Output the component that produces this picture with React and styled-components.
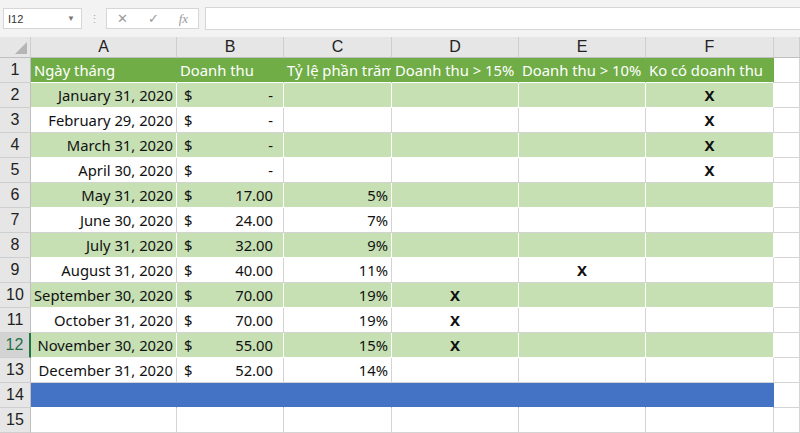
import React from "react";
import styled, { createGlobalStyle } from "styled-components";

const Global = createGlobalStyle`
  body { margin: 0; background: #fff; font-family: "Noto Sans", sans-serif; overflow: hidden; }
`;

const Bar = styled.div`
  height: 37px;
  background: #f3f3f3;
  display: flex;
  align-items: center;
  gap: 6px;
  padding: 0 0 0 3px;
  box-sizing: border-box;
`;
const NameBox = styled.div`
  width: 79px;
  height: 21px;
  background: #fff;
  border: 1px solid #d6d6d6;
  box-sizing: border-box;
  display: flex;
  align-items: center;
  justify-content: space-between;
  padding: 0 6px 0 4px;
  font: 11px "Liberation Sans", sans-serif;
  color: #333;
`;
const Dots = styled.div`
  color: #aaa;
  font-size: 11px;
  width: 12px;
  text-align: center;
`;
const Buttons = styled.div`
  width: 93px;
  height: 21px;
  background: #fff;
  border: 1px solid #d6d6d6;
  box-sizing: border-box;
  display: flex;
  align-items: center;
  justify-content: space-around;
  color: #999;
  font: 13px "Liberation Serif", serif;
`;
const Formula = styled.div`
  flex: 1;
  height: 21px;
  background: #fff;
  border: 1px solid #d6d6d6;
  border-right: none;
`;

const Grid = styled.div`
  display: grid;
  grid-template-columns: 31px 146px 107px 108px 127px 127px 128px 26px;
  grid-template-rows: 21px;
  grid-auto-rows: 25px;
`;
const ColHead = styled.div`
  background: #e6e6e6;
  border-right: 1px solid #cfcfcf;
  border-bottom: 1px solid #bfbfbf;
  display: flex;
  align-items: center;
  justify-content: center;
  font: 16px "Liberation Sans", sans-serif;
  color: #222;
`;
const Corner = styled(ColHead)`
  justify-content: flex-end;
  align-items: flex-end;
  padding: 3px;
  box-sizing: border-box;
`;
const RowHead = styled.div`
  background: ${p => (p.$sel ? "#d3d3d3" : "#e6e6e6")};
  color: ${p => (p.$sel ? "#217346" : "#222")};
  border-right: ${p => (p.$sel ? "2px solid #217346" : "1px solid #bfbfbf")};
  border-bottom: 1px solid #cfcfcf;
  display: flex;
  align-items: center;
  justify-content: center;
  font: 16px "Liberation Sans", sans-serif;
`;
const Cell = styled.div`
  background: ${p => p.$bg};
  color: ${p => (p.$head ? "#fff" : "#111")};
  border-right: 1px solid ${p => (p.$head || p.$blue ? p.$bg : p.$bg === "#fff" ? "#d4d4d4" : "#fff")};
  border-bottom: 1px solid ${p => (p.$bg === "#fff" ? "#d4d4d4" : "#fff")};
  display: flex;
  align-items: center;
  justify-content: ${p => p.$align || "flex-start"};
  padding: 0 3px;
  font-size: ${p => (p.$bold ? "15px" : "14.8px")};
  font-weight: ${p => (p.$bold ? 700 : 400)};
  white-space: nowrap;
  box-sizing: border-box;
  position: relative;
  z-index: ${p => (p.$head ? 1 : 0)};
`;
const Money = styled.span`
  display: flex;
  justify-content: space-between;
  width: 100%;
  padding: 0 10px 0 7px;
  box-sizing: border-box;
`;

const rows = [
  ["January 31, 2020", "-", "", 0, 0, 1],
  ["February 29, 2020", "-", "", 0, 0, 1],
  ["March 31, 2020", "-", "", 0, 0, 1],
  ["April 30, 2020", "-", "", 0, 0, 1],
  ["May 31, 2020", "17.00", "5%", 0, 0, 0],
  ["June 30, 2020", "24.00", "7%", 0, 0, 0],
  ["July 31, 2020", "32.00", "9%", 0, 0, 0],
  ["August 31, 2020", "40.00", "11%", 0, 1, 0],
  ["September 30, 2020", "70.00", "19%", 1, 0, 0],
  ["October 31, 2020", "70.00", "19%", 1, 0, 0],
  ["November 30, 2020", "55.00", "15%", 1, 0, 0],
  ["December 31, 2020", "52.00", "14%", 0, 0, 0],
];
const heads = ["Ngày tháng", "Doanh thu", "Tỷ lệ phần trăm", "Doanh thu > 15%", "Doanh thu > 10%", "Ko có doanh thu"];

export default function App() {
  return (
    <>
      <Global />
      <Bar>
        <NameBox>I12 <span style={{ fontSize: 8, color: "#777" }}>▼</span></NameBox>
        <Dots>⋮</Dots>
        <Buttons><span>✕</span><span>✓</span><i>fx</i></Buttons>
        <Formula />
      </Bar>
      <Grid>
        <Corner><svg width="12" height="12"><path d="M12 0V12H0Z" fill="#b5b5b5" /></svg></Corner>
        {"ABCDEF".split("").map(c => <ColHead key={c}>{c}</ColHead>)}
        <ColHead />
        <RowHead>1</RowHead>
        {heads.map((h, i) => (
          <Cell key={h} $bg="#70ad47" $head style={i === 2 ? { overflow: "hidden" } : undefined}>{h}</Cell>
        ))}
        <Cell $bg="#fff" />
        {rows.map((r, i) => {
          const bg = i % 2 === 0 ? "#c6e0b4" : "#fff";
          return (
            <React.Fragment key={i}>
              <RowHead $sel={i === 10}>{i + 2}</RowHead>
              <Cell $bg={bg} $align="flex-end">{r[0]}</Cell>
              <Cell $bg={bg} style={{ padding: 0 }}><Money><span>$</span><span>{r[1]}</span></Money></Cell>
              <Cell $bg={bg} $align="flex-end">{r[2]}</Cell>
              {[3, 4, 5].map(k => (
                <Cell key={k} $bg={bg} $align="center" $bold>{r[k] ? "X" : ""}</Cell>
              ))}
              <Cell $bg="#fff" />
            </React.Fragment>
          );
        })}
        <RowHead>14</RowHead>
        {[0, 1, 2, 3, 4, 5].map(k => <Cell key={k} $bg="#4472c4" $blue />)}
        <Cell $bg="#fff" />
        <RowHead>15</RowHead>
        {[0, 1, 2, 3, 4, 5, 6].map(k => <Cell key={k} $bg="#fff" />)}
      </Grid>
    </>
  );
}
